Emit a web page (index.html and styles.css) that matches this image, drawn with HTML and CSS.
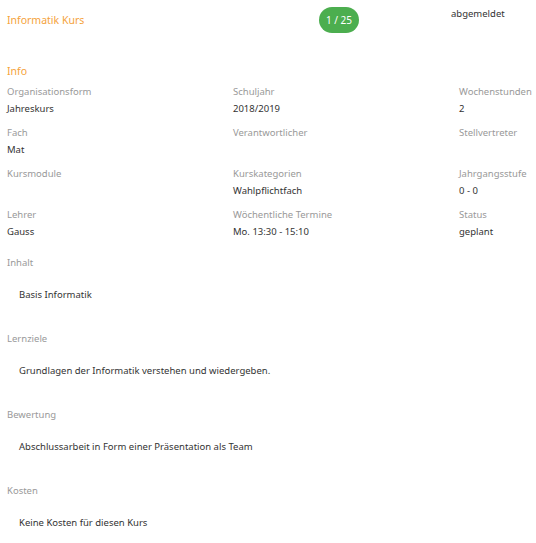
FILE: index.html
```html
<!DOCTYPE html>
<html lang="de">
<head>
<meta charset="utf-8">
<title>Informatik Kurs</title>
<link rel="stylesheet" href="styles.css">
</head>
<body>
<div class="page">
  <div class="header">
    <div class="title">Informatik Kurs</div>
    <div class="badge-wrap"><span class="badge">1 / 25</span></div>
    <div class="state">abgemeldet</div>
  </div>

  <div class="info">
    <div class="info-title">Info</div>
    <div class="grid">
      <div class="cell"><div class="label">Organisationsform</div><div class="value">Jahreskurs</div></div>
      <div class="cell"><div class="label">Schuljahr</div><div class="value">2018/2019</div></div>
      <div class="cell"><div class="label">Wochenstunden</div><div class="value">2</div></div>

      <div class="cell"><div class="label">Fach</div><div class="value">Mat</div></div>
      <div class="cell"><div class="label">Verantwortlicher</div><div class="value"></div></div>
      <div class="cell"><div class="label">Stellvertreter</div><div class="value"></div></div>

      <div class="cell"><div class="label">Kursmodule</div><div class="value"></div></div>
      <div class="cell"><div class="label">Kurskategorien</div><div class="value">Wahlpflichtfach</div></div>
      <div class="cell"><div class="label">Jahrgangsstufe</div><div class="value">0 - 0</div></div>

      <div class="cell"><div class="label">Lehrer</div><div class="value">Gauss</div></div>
      <div class="cell"><div class="label">Wöchentliche Termine</div><div class="value">Mo. 13:30 - 15:10</div></div>
      <div class="cell"><div class="label">Status</div><div class="value">geplant</div></div>
    </div>
  </div>

  <div class="sections">
    <div class="section">
      <div class="label">Inhalt</div>
      <div class="sec-content">Basis Informatik</div>
    </div>
    <div class="section">
      <div class="label">Lernziele</div>
      <div class="sec-content">Grundlagen der Informatik verstehen und wiedergeben.</div>
    </div>
    <div class="section">
      <div class="label">Bewertung</div>
      <div class="sec-content">Abschlussarbeit in Form einer Präsentation als Team</div>
    </div>
    <div class="section">
      <div class="label">Kosten</div>
      <div class="sec-content">Keine Kosten für diesen Kurs</div>
    </div>
  </div>
</div>
</body>
</html>
```

FILE: styles.css
```css
html, body {
  margin: 0;
  padding: 0;
  background: #ffffff;
}

body {
  font-family: "Noto Sans", "Open Sans", sans-serif;
  font-size: 9.5px;
  color: #333333;
  overflow: hidden;
}

.page {
  padding: 0 7px;
}

.header {
  display: grid;
  grid-template-columns: 312px 132px auto;
  height: 40px;
  align-items: center;
}

.title {
  font-size: 10.5px;
  color: #f5a33c;
  line-height: 17px;
}

.badge-wrap {
  display: flex;
}

.badge {
  display: flex;
  align-items: center;
  justify-content: center;
  width: 40px;
  height: 26px;
  border-radius: 13px;
  background: #4cae4f;
  color: #ffffff;
  font-size: 10px;
}

.state {
  align-self: start;
  margin-top: 5px;
  line-height: 17px;
  color: #333333;
}

.info {
  margin-top: 23px;
}

.info-title {
  font-size: 10.5px;
  line-height: 17px;
  color: #f5a33c;
  margin-bottom: 3px;
}

.grid {
  display: grid;
  grid-template-columns: 226px 226px 1fr;
  row-gap: 7px;
}

.cell {
  white-space: nowrap;
}

.label {
  line-height: 17px;
  min-height: 17px;
  color: #999999;
}

.value {
  line-height: 17px;
  min-height: 17px;
  color: #333333;
}

.sections {
  margin-top: 14px;
}

.sec-content {
  padding: 15px 0 27px 12px;
  line-height: 17px;
  color: #333333;
}
```
